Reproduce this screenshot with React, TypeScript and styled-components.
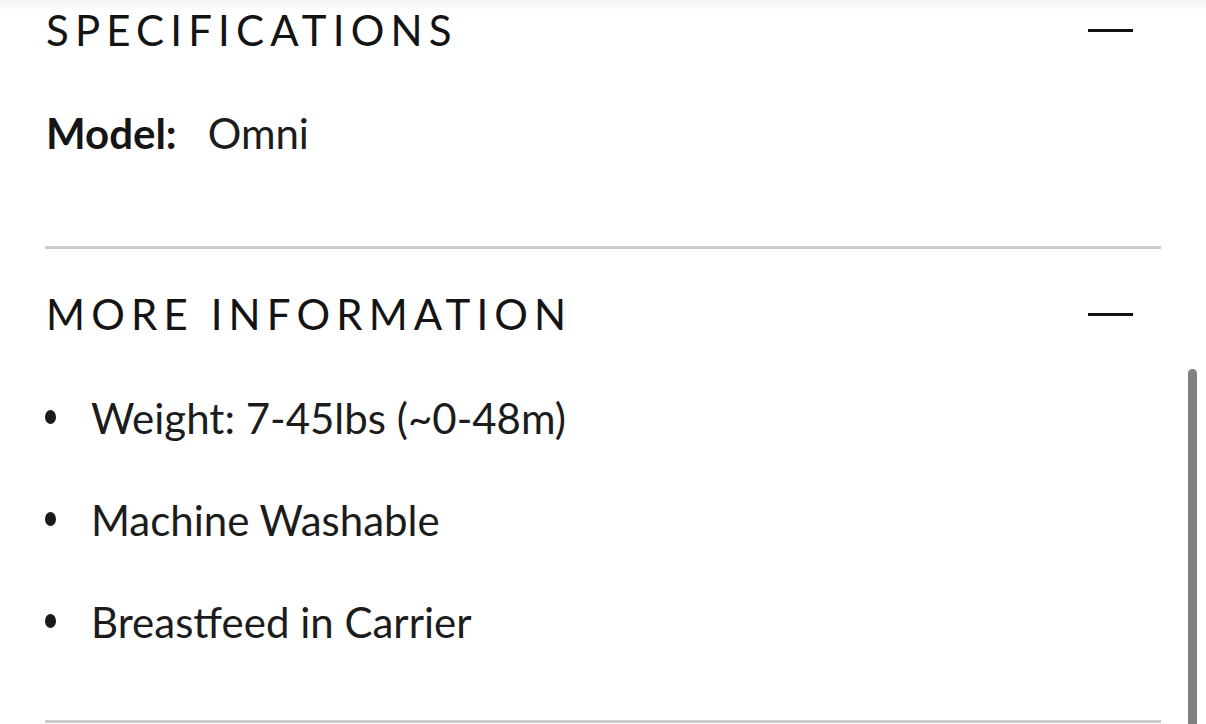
import React from "react";
import styled, { createGlobalStyle } from "styled-components";

const GlobalStyle = createGlobalStyle`
  html, body {
    margin: 0;
    padding: 0;
    background: #ffffff;
  }
  body {
    font-family: Lato, "Open Sans", "Liberation Sans", sans-serif;
    color: #1c1c1c;
    overflow: hidden;
  }
`;

const Page = styled.div`
  position: relative;
  width: 1206px;
  height: 724px;
  overflow: hidden;
  background: #fff;
`;

const TopShade = styled.div`
  position: absolute;
  left: 0;
  right: 0;
  top: 0;
  height: 11px;
  background: linear-gradient(#f3f3f3, #fafafa 70%, #ffffff);
`;

const Content = styled.div`
  padding: 0 45px 0 45px;
`;

const Section = styled.section<{ $first?: boolean }>`
  padding-top: ${(p) => (p.$first ? "0" : "35px")};
  padding-bottom: ${(p) => (p.$first ? "83px" : "68px")};
  border-bottom: 3px solid #cbcbcb;
`;

const Header = styled.div`
  display: flex;
  align-items: center;
  justify-content: space-between;
  padding: 0 28px 0 1px;
`;

const Title = styled.h2`
  margin: 0;
  font-family: Lato, sans-serif;
  font-weight: 400;
  font-size: 42px;
  line-height: 60px;
  letter-spacing: 6.15px;
  color: #141414;
`;

const Minus = styled.span`
  display: block;
  width: 45px;
  height: 3px;
  background: #111;
`;

const SpecRow = styled.div`
  margin-top: 43px;
  padding-left: 1px;
  font-size: 42px;
  line-height: 60px;
  color: #1c1c1c;
  display: flex;
  gap: 31px;
`;

const SpecLabel = styled.span`
  font-weight: 700;
  color: #151515;
`;

const List = styled.ul`
  list-style: none;
  margin: 44px 0 0 0;
  padding: 0;
  display: flex;
  flex-direction: column;
  gap: 42px;
`;

const Item = styled.li`
  display: flex;
  align-items: center;
  font-size: 42px;
  line-height: 60px;
  color: #1c1c1c;
`;

const Dot = styled.span`
  flex: none;
  width: 11px;
  height: 14px;
  border-radius: 50%;
  background: #1a1a1a;
  margin: -3px 35px 0 0;
`;

const ScrollThumb = styled.div`
  position: absolute;
  left: 1188px;
  top: 369px;
  width: 9px;
  height: 380px;
  border-radius: 5px;
  background: #808080;
`;

export default function App() {
  const items = ["Weight: 7-45lbs (~0-48m)", "Machine Washable", "Breastfeed in Carrier"];
  return (
    <>
      <GlobalStyle />
      <Page>
        <TopShade />
        <Content>
          <Section $first>
            <Header>
              <Title>SPECIFICATIONS</Title>
              <Minus />
            </Header>
            <SpecRow>
              <SpecLabel>Model:</SpecLabel>
              <span>Omni</span>
            </SpecRow>
          </Section>
          <Section>
            <Header>
              <Title>MORE INFORMATION</Title>
              <Minus />
            </Header>
            <List>
              {items.map((t) => (
                <Item key={t}>
                  <Dot />
                  {t}
                </Item>
              ))}
            </List>
          </Section>
        </Content>
        <ScrollThumb />
      </Page>
    </>
  );
}
